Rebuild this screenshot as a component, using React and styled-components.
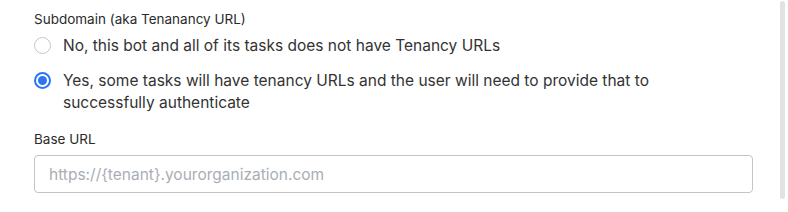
import React, { useState } from 'react'
import styled, { createGlobalStyle } from 'styled-components'

const GlobalStyle = createGlobalStyle`
  html, body {
    margin: 0;
    padding: 0;
    background: #fff;
  }
  body {
    font-family: Inter, "Noto Sans", "Liberation Sans", sans-serif;
    color: #2b2b2b;
  }
`

const Page = styled.div`
  display: flex;
  align-items: flex-start;
  padding-left: 34px;
  width: 788px;
  height: 212px;
  box-sizing: border-box;
`

const Form = styled.div`
  width: 719px;
  padding-top: 10px;
  display: flex;
  flex-direction: column;
`

const FieldLabel = styled.div`
  font-size: 13.5px;
  line-height: 18px;
  color: #2b2b2b;
  margin-top: ${p => p.$top || 0}px;
`

const RadioGroup = styled.div`
  display: flex;
  flex-direction: column;
  gap: 13px;
  margin-top: 7px;
`

const Option = styled.label`
  display: flex;
  align-items: flex-start;
  gap: 12px;
  font-size: 15.5px;
  line-height: 22px;
  color: #333;
  cursor: pointer;
`

const Circle = styled.span`
  flex: none;
  width: 17px;
  height: 17px;
  margin-top: 2px;
  border-radius: 50%;
  box-sizing: border-box;
  border: ${p => (p.$checked ? '2px solid #2b74f6' : '1px solid #c6c6c6')};
  display: flex;
  align-items: center;
  justify-content: center;
  background: #fff;

  &::after {
    content: '';
    display: ${p => (p.$checked ? 'block' : 'none')};
    width: 9px;
    height: 9px;
    border-radius: 50%;
    background: #2b74f6;
  }
`

const OptionText = styled.span`
  max-width: 640px;
`

const Input = styled.input`
  margin-top: 7px;
  height: 38px;
  box-sizing: border-box;
  width: 100%;
  border: 1px solid #c4c4c8;
  border-radius: 4px;
  padding: 0 14px;
  font-family: inherit;
  font-size: 15.5px;
  color: #333;
  outline: none;

  &::placeholder {
    color: #a9aeb5;
  }
`

const ScrollThumb = styled.div`
  margin-left: 27px;
  margin-top: 1px;
  width: 5px;
  height: 198px;
  border-radius: 3px;
  background: #e2e2e2;
`

const options = [
  { id: 'no', text: 'No, this bot and all of its tasks does not have Tenancy URLs' },
  {
    id: 'yes',
    text: 'Yes, some tasks will have tenancy URLs and the user will need to provide that to successfully authenticate',
  },
]

export default function App() {
  const [value, setValue] = useState('yes')

  return (
    <>
      <GlobalStyle />
      <Page>
        <Form>
          <FieldLabel>Subdomain (aka Tenanancy URL)</FieldLabel>
          <RadioGroup>
            {options.map(o => (
              <Option key={o.id} onClick={() => setValue(o.id)}>
                <Circle $checked={value === o.id} />
                <OptionText>{o.text}</OptionText>
              </Option>
            ))}
          </RadioGroup>
          <FieldLabel $top={16}>Base URL</FieldLabel>
          <Input placeholder="https://{tenant}.yourorganization.com" />
        </Form>
        <ScrollThumb />
      </Page>
    </>
  )
}
